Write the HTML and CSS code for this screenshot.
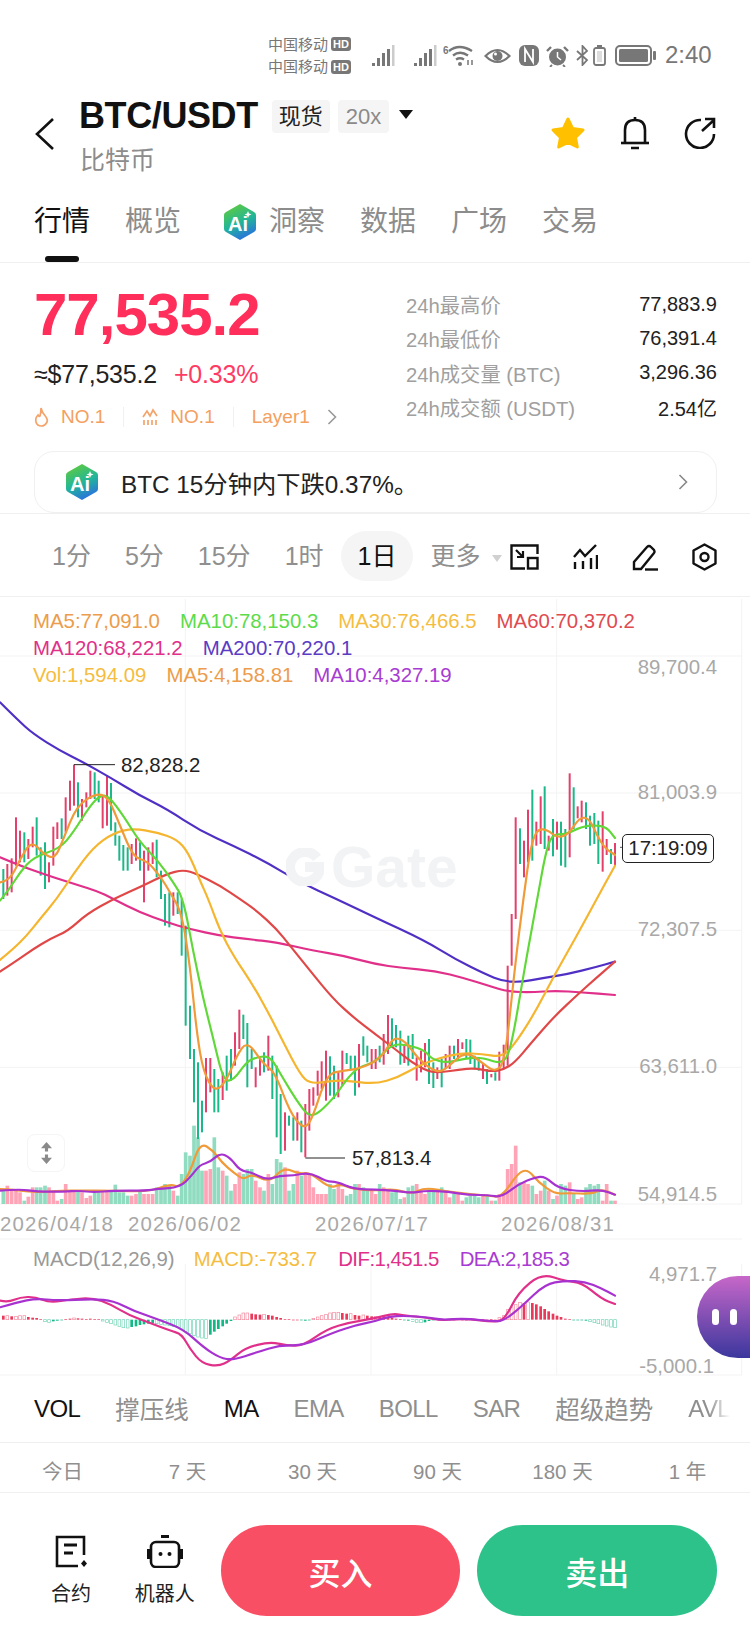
FILE: index.html
```html
<!DOCTYPE html>
<html lang="zh-CN">
<head>
    <meta charset="UTF-8">
    <meta name="viewport" content="width=device-width, initial-scale=1.0">
    <title>BTC/USDT</title>
    <link rel="stylesheet" href="styles.css">
</head>
<body>
    <svg class="defs" width="0" height="0">
        <defs>
            <linearGradient id="aiGrad" x1="0.2" y1="0" x2="0.6" y2="1">
                <stop offset="0" stop-color="#62cc3a"/>
                <stop offset="0.55" stop-color="#22b59a"/>
                <stop offset="1" stop-color="#2a6fe0"/>
            </linearGradient>
            <symbol id="aiIcon" viewBox="0 0 34 38">
                <path d="M17 1 L31 9 Q33 10 33 12 V26 Q33 28 31 29 L17 37 L3 29 Q1 28 1 26 V12 Q1 10 3 9 Z" fill="url(#aiGrad)"/>
                <text x="15" y="28" text-anchor="middle" class="ai-letters">Ai</text>
                <path d="M25 8 L26 10.500 L28.500 11.500 L26 12.500 L25 15 L24 12.500 L21.500 11.500 L24 10.500 Z" fill="#fff"/>
            </symbol>
        </defs>
    </svg>

    <div class="status-bar">
        <div class="carriers">
            <div class="carrier">中国移动<span class="hd">HD</span></div>
            <div class="carrier">中国移动<span class="hd">HD</span></div>
        </div>
        <svg class="st-signal" width="23" height="21" viewBox="0 0 23 21" fill="#777"><rect x="0" y="18" width="3" height="3"/><rect x="5" y="13" width="3" height="8"/><rect x="10" y="8" width="3" height="13"/><rect x="15" y="4" width="3" height="17"/><rect x="20" y="0" width="2.500" height="21" fill="#ccc"/></svg>
        <svg class="st-signal2" width="23" height="21" viewBox="0 0 23 21" fill="#777"><rect x="0" y="18" width="3" height="3"/><rect x="5" y="13" width="3" height="8"/><rect x="10" y="8" width="3" height="13"/><rect x="15" y="4" width="3" height="17"/><rect x="20" y="0" width="2.500" height="21" fill="#ccc"/></svg>
        <svg class="st-wifi" width="31" height="22" viewBox="0 0 31 22" fill="none" stroke="#777" stroke-width="2.4">
            <text x="0" y="10" class="st-six">6</text>
            <path d="M6 7 Q16 -1 29 7"/><path d="M10 11.500 Q17 6 25 11.500"/><path d="M13 15.500 Q17 13 21 15.500"/>
            <circle cx="17" cy="20" r="2" fill="#777" stroke="none"/>
            <path d="M25 16 V21 M29 16 V21" stroke-width="1.5"/>
        </svg>
        <svg class="st-eye" width="27" height="16" viewBox="0 0 27 16"><path d="M1.500 8 Q13.500 -4 25.500 8 Q13.500 20 1.500 8 Z" fill="none" stroke="#777" stroke-width="2.2"/><circle cx="13.500" cy="8" r="5" fill="#777"/><circle cx="11.500" cy="6" r="1.500" fill="#fff"/></svg>
        <svg class="st-nfc" width="20" height="21" viewBox="0 0 20 21"><rect x="0" y="0" width="20" height="21" rx="6" fill="#777"/><path d="M6 17 V4 L14 17 V4" fill="none" stroke="#fff" stroke-width="1.800"/></svg>
        <svg class="st-alarm" width="23" height="22" viewBox="0 0 23 22" fill="none" stroke="#777" stroke-width="2.400"><path d="M1 6 L5 2 M22 6 L18 2"/><path d="M6 20 L4 22 M17 20 L19 22" stroke-width="1.800"/><circle cx="11.500" cy="12" r="8.500" fill="#777" stroke="none"/><path d="M11.500 7 V12 L15 15" stroke="#fff" stroke-width="1.500"/></svg>
        <svg class="st-bt" width="13" height="21" viewBox="0 0 13 21" fill="none" stroke="#777" stroke-width="1.8"><path d="M1 6 L11 15 L6.500 20 V1 L11 6 L1 15"/></svg>
        <svg class="st-vib" width="13" height="21" viewBox="0 0 13 21"><rect x="1" y="3" width="11" height="17" rx="2" fill="none" stroke="#777" stroke-width="1.8"/><rect x="4" y="0" width="5" height="2" fill="#777"/><rect x="4" y="6" width="5" height="11" fill="#ddd"/></svg>
        <svg class="st-batt" width="41" height="21" viewBox="0 0 41 21"><rect x="1" y="1" width="35" height="19" rx="4" fill="none" stroke="#777" stroke-width="2"/><rect x="4" y="4" width="29" height="13" rx="1.500" fill="#777"/><rect x="38" y="6" width="3" height="9" rx="1" fill="#777"/></svg>
        <span class="clock">2:40</span>
    </div>

    <header class="header">
        <svg class="back" width="20" height="32" viewBox="0 0 20 32"><path d="M18 1 L2 16 L18 31" fill="none" stroke="#111" stroke-width="2.6"/></svg>
        <div class="pair">
            <div class="pair-top">
                <h1 class="pair-name">BTC/USDT</h1>
                <span class="chip chip-dark">现货</span>
                <span class="chip">20x</span>
                <span class="caret"></span>
            </div>
            <div class="pair-sub">比特币</div>
        </div>
        <div class="header-icons">
            <svg width="36" height="34" viewBox="0 0 36 34"><path d="M18 3 L22.500 12.500 L33 14 L25.500 21.500 L27.300 31 L18 26.500 L8.700 31 L10.500 21.500 L3 14 L13.500 12.500 Z" fill="#ffc000" stroke="#ffc000" stroke-width="3" stroke-linejoin="round"/></svg>
            <svg width="30" height="34" viewBox="0 0 30 34" fill="none" stroke="#111" stroke-width="2.6"><path d="M5 26 V14 Q5 4 15 4 Q25 4 25 14 V26"/><path d="M1 27 H29"/><path d="M15 1 V4 M11 32 H19"/></svg>
            <svg width="32" height="32" viewBox="0 0 32 32" fill="none" stroke="#111" stroke-width="2.6"><path d="M17 3 A14 14 0 1 0 30 17"/><path d="M18 14 L30 3 M21 2 H30 V11"/></svg>
        </div>
    </header>

    <nav class="tabs">
        <span class="tab active">行情</span>
        <span class="tab">概览</span>
        <span class="tab tab-ai"><svg width="34" height="38"><use href="#aiIcon"/></svg>洞察</span>
        <span class="tab">数据</span>
        <span class="tab">广场</span>
        <span class="tab">交易</span>
    </nav>

    <section class="summary">
        <div class="summary-left">
            <div class="price">77,535.2</div>
            <div class="price-sub">≈$77,535.2<span class="change">+0.33%</span></div>
            <div class="tags">
                <svg width="15" height="20" viewBox="0 0 15 20" fill="none" stroke="#f4a46a" stroke-width="1.7"><path d="M7 1 Q8 6 12 10 Q14 13 13 15 Q11 19 7.500 19 Q3 19 2 15 Q1 11 4 8 Q5 10 6 9 Q7 6 7 1 Z"/></svg>
                <span class="tag-text">NO.1</span>
                <span class="tag-sep"></span>
                <svg width="16" height="18" viewBox="0 0 16 18" fill="none" stroke="#f4a46a" stroke-width="1.7"><path d="M1 9 L5 3 L8 8 L11 2 L15 8"/><path d="M2 12 V17 M6 12 V17 M10 12 V17 M14 12 V17"/></svg>
                <span class="tag-text">NO.1</span>
                <span class="tag-sep"></span>
                <span class="tag-text">Layer1</span>
                <svg class="tag-chev" width="10" height="16" viewBox="0 0 10 16"><path d="M1.500 1 L8.500 8 L1.500 15" fill="none" stroke="#999" stroke-width="1.6"/></svg>
            </div>
        </div>
        <dl class="stats">
            <div class="stat"><dt>24h最高价</dt><dd>77,883.9</dd></div>
            <div class="stat"><dt>24h最低价</dt><dd>76,391.4</dd></div>
            <div class="stat"><dt>24h成交量 (BTC)</dt><dd>3,296.36</dd></div>
            <div class="stat"><dt>24h成交额 (USDT)</dt><dd>2.54亿</dd></div>
        </dl>
    </section>

    <div class="ai-card">
        <svg width="34" height="38"><use href="#aiIcon"/></svg>
        <span class="ai-text">BTC 15分钟内下跌0.37%。</span>
        <svg class="ai-chev" width="10" height="16" viewBox="0 0 10 16"><path d="M1.500 1 L8.500 8 L1.500 15" fill="none" stroke="#888" stroke-width="1.6"/></svg>
    </div>

    <div class="periods">
        <span class="period">1分</span>
        <span class="period">5分</span>
        <span class="period">15分</span>
        <span class="period">1时</span>
        <span class="period active">1日</span>
        <span class="period more">更多<i class="more-caret"></i></span>
        <div class="tools">
            <svg width="29" height="26" viewBox="0 0 29 26" fill="none" stroke="#111" stroke-width="2.4"><path d="M15 24.500 H1.500 V1.500 H27.500 V10"/><rect x="18" y="14" width="9.500" height="10.500"/><path d="M6 6 L13 13 M13 7 V13 H7" stroke-width="2.2"/></svg>
            <svg width="25" height="26" viewBox="0 0 25 26" fill="none" stroke="#111" stroke-width="2.4"><path d="M1 13 L7 6 L12 12 L23 1"/><path d="M2 18 V25 M10 17 V25 M18 14 V25 M24 11 V25"/></svg>
            <svg width="26" height="27" viewBox="0 0 26 27" fill="none" stroke="#111" stroke-width="2.4"><path d="M2 25 V18 L15 3 Q17 1 19 3 L22 6 Q23 8 22 9 L9 25 Z"/><path d="M13 25.500 H26"/></svg>
            <svg width="25" height="28" viewBox="0 0 25 28" fill="none" stroke="#111" stroke-width="2.4"><path d="M12.500 1.500 L23.500 7.500 V20.500 L12.500 26.500 L1.500 20.500 V7.500 Z" stroke-linejoin="round"/><circle cx="12.500" cy="14" r="4"/></svg>
        </div>
    </div>

    <section class="chart">
        <svg class="chart-svg" id="chartSvg" viewBox="0 0 2250 2340"></svg>

        <div class="legend">
            <div class="legend-row">
                <span class="c-orange">MA5:77,091.0</span>
                <span class="c-green">MA10:78,150.3</span>
                <span class="c-yellow">MA30:76,466.5</span>
                <span class="c-red">MA60:70,370.2</span>
            </div>
            <div class="legend-row">
                <span class="c-pink">MA120:68,221.2</span>
                <span class="c-blue">MA200:70,220.1</span>
            </div>
            <div class="legend-row">
                <span class="c-yellow">Vol:1,594.09</span>
                <span class="c-orange">MA5:4,158.81</span>
                <span class="c-purple">MA10:4,327.19</span>
            </div>
        </div>

        <div class="watermark">
            <svg width="38" height="38" viewBox="0 0 38 38" fill="none" stroke="#f2f3f4" stroke-width="10"><path d="M31 10 A15 15 0 1 0 34 19 H19"/></svg>
            <span>Gate</span>
        </div>

        <span class="axis axis-1">89,700.4</span>
        <span class="axis axis-2">81,003.9</span>
        <span class="axis axis-3">72,307.5</span>
        <span class="axis axis-4">63,611.0</span>
        <span class="axis axis-5">54,914.5</span>
        <span class="axis axis-6">4,971.7</span>
        <span class="axis axis-7">-5,000.1</span>

        <span class="mark mark-high">82,828.2</span>
        <span class="mark mark-low">57,813.4</span>
        <span class="countdown">17:19:09</span>

        <div class="resize">
            <svg width="11" height="22" viewBox="0 0 14 28" fill="#8a8a8a"><path d="M7 0 L14 8 H9 V12 H5 V8 H0 Z"/><path d="M7 28 L14 20 H9 V16 H5 V20 H0 Z"/></svg>
        </div>

        <span class="date date-1">2026/04/18</span>
        <span class="date date-2">2026/06/02</span>
        <span class="date date-3">2026/07/17</span>
        <span class="date date-4">2026/08/31</span>

        <div class="macd-legend">
            <span class="c-gray">MACD(12,26,9)</span>
            <span class="c-yellow">MACD:-733.7</span>
            <span class="c-pink tight">DIF:1,451.5</span>
            <span class="c-purple tight">DEA:2,185.3</span>
        </div>

        <div class="assistant"><i></i><i></i></div>
    </section>

    <nav class="indicators">
        <span class="ind on latin">VOL</span>
        <span class="ind">撑压线</span>
        <span class="ind on latin">MA</span>
        <span class="ind latin">EMA</span>
        <span class="ind latin">BOLL</span>
        <span class="ind latin">SAR</span>
        <span class="ind">超级趋势</span>
        <span class="ind latin fade">AVL</span>
    </nav>

    <div class="ranges">
        <span>今日</span>
        <span>7 天</span>
        <span>30 天</span>
        <span>90 天</span>
        <span>180 天</span>
        <span>1 年</span>
    </div>

    <footer class="actions">
        <div class="action-link link-contract">
            <svg width="32" height="33" viewBox="0 0 32 33" fill="none" stroke="#111" stroke-width="2.6"><path d="M29 20 V2 H2 V31 H23"/><path d="M9 10 H22 M9 18 H18" stroke-width="3"/><path d="M29 25 L32 28.500 L29 32 L26 28.500 Z" fill="#111" stroke="none"/></svg>
            <span>合约</span>
        </div>
        <div class="action-link link-robot">
            <svg width="36" height="33" viewBox="0 0 36 33" fill="none" stroke="#111" stroke-width="2.6"><rect x="4" y="7" width="28" height="25" rx="5"/><path d="M14 1.500 H22" stroke-width="3"/><path d="M1.500 14 V24 M34.500 14 V24" stroke-width="3"/><circle cx="13.500" cy="19" r="2" fill="#111" stroke="none"/><circle cx="22.500" cy="19" r="2" fill="#111" stroke="none"/></svg>
            <span>机器人</span>
        </div>
        <button class="btn btn-buy">买入</button>
        <button class="btn btn-sell">卖出</button>
    </footer>

    <script>
        // all chart coordinates are in 3x units, y = 0 is page y 600
        const candles = [
            [10,810,900,'g'],[22,795,890,'r'],[35,778,880,'r'],[48,655,800,'r'],[60,695,790,'r'],[73,700,790,'g'],[85,720,780,'r'],[98,683,745,'r'],[110,655,770,'g'],[122,745,830,'g'],
            [135,730,870,'g'],[147,790,850,'r'],[160,683,800,'r'],[172,670,720,'r'],[185,658,720,'g'],[197,595,700,'r'],[210,545,635,'r'],[222,497,620,'r'],[234,550,655,'g'],[246,600,665,'r'],
            [259,580,625,'r'],[271,515,600,'r'],[284,520,600,'g'],[296,545,610,'g'],[308,590,688,'r'],[321,530,680,'r'],[333,552,695,'g'],[346,670,740,'g'],[358,710,785,'g'],[370,738,815,'g'],
            [383,745,815,'g'],[395,735,795,'r'],[408,718,785,'r'],[420,730,815,'g'],[432,755,910,'r'],[445,745,815,'r'],[458,730,795,'r'],[470,722,835,'g'],[483,815,900,'g'],[495,885,980,'g'],
            [508,880,985,'g'],[520,880,950,'r'],[533,880,945,'g'],[545,900,1070,'g'],[557,980,1280,'g'],[570,1220,1380,'g'],[582,1350,1510,'g'],[594,1390,1620,'g'],[606,1505,1600,'g'],[618,1377,1540,'r'],
            [631,1377,1480,'r'],[643,1410,1540,'g'],[655,1440,1540,'g'],[668,1420,1503,'r'],[680,1370,1475,'g'],[693,1350,1445,'g'],[705,1300,1400,'r'],[718,1232,1350,'r'],[730,1247,1320,'g'],[742,1272,1465,'g'],
            [755,1350,1410,'g'],[767,1405,1465,'r'],[780,1380,1430,'r'],[792,1360,1420,'g'],[805,1310,1415,'r'],[817,1370,1500,'g'],[830,1400,1615,'g'],[842,1485,1665,'g'],[855,1540,1655,'r'],[867,1550,1580,'g'],
            [880,1555,1625,'g'],[892,1540,1625,'r'],[904,1565,1660,'g'],[916,1515,1675,'r'],[928,1470,1595,'r'],[940,1465,1520,'r'],[953,1415,1490,'r'],[965,1387,1470,'r'],[978,1355,1505,'r'],[990,1372,1490,'g'],
            [1002,1400,1500,'g'],[1015,1420,1495,'r'],[1027,1355,1460,'r'],[1040,1362,1395,'g'],[1052,1370,1410,'g'],[1065,1370,1490,'g'],[1077,1335,1465,'r'],[1090,1312,1370,'g'],[1102,1340,1390,'g'],[1115,1350,1410,'r'],
            [1127,1350,1410,'r'],[1139,1340,1390,'g'],[1151,1305,1397,'r'],[1164,1248,1365,'r'],[1176,1258,1340,'g'],[1188,1278,1345,'g'],[1201,1295,1397,'g'],[1213,1340,1392,'r'],[1225,1310,1400,'g'],[1238,1305,1380,'g'],
            [1250,1375,1445,'r'],[1263,1355,1420,'r'],[1275,1332,1405,'r'],[1287,1320,1455,'g'],[1300,1390,1467,'g'],[1312,1405,1440,'r'],[1325,1380,1465,'g'],[1337,1365,1410,'r'],[1349,1340,1410,'r'],[1362,1340,1380,'g'],
            [1374,1320,1380,'r'],[1387,1330,1350,'r'],[1399,1320,1380,'g'],[1411,1322,1395,'g'],[1424,1370,1410,'g'],[1436,1380,1415,'g'],[1449,1395,1440,'r'],[1461,1410,1455,'g'],[1474,1425,1435,'r'],[1486,1420,1445,'g'],
            [1498,1358,1445,'r'],[1511,1337,1410,'r'],[1523,1100,1400,'r'],[1535,945,1100,'r'],[1547,655,960,'r'],[1560,688,795,'g'],[1572,725,835,'r'],[1584,632,790,'r'],[1597,572,785,'g'],[1609,668,740,'r'],
            [1622,592,735,'r'],[1634,562,750,'g'],[1646,710,755,'r'],[1659,660,772,'g'],[1671,668,752,'r'],[1683,668,800,'g'],[1696,690,805,'g'],[1709,523,775,'r'],[1721,565,690,'g'],[1733,622,658,'r'],
            [1745,605,670,'r'],[1758,610,690,'g'],[1770,650,740,'g'],[1783,642,735,'g'],[1795,665,795,'g'],[1808,637,818,'r'],[1820,720,768,'r'],[1833,750,795,'g'],[1845,732,800,'r']
        ];
        const volumes = [
            45,55,45,40,35,10,22,50,50,50,55,50,40,10,15,60,40,40,40,35,18,25,35,40,40,38,40,58,35,35,25,25,30,40,30,30,
            30,50,50,60,55,40,25,90,155,145,235,200,100,100,105,200,110,100,85,40,60,95,90,105,105,70,50,40,90,60,135,125,110,40,60,100,85,90,90,50,30,30,30,60,45,60,45,25,30,60,60,50,45,45,
            30,60,50,45,35,40,15,20,50,55,60,40,30,45,45,45,50,40,20,30,30,10,20,25,25,20,30,25,10,10,30,35,105,120,175,65,65,60,55,30,40,70,40,15,25,60,55,65,30,15,20,50,60,55,60,10,60,10,10
        ];
        const macdBars = [
            12,12,10,10,12,12,8,6,5,2,-6,-8,-5,-3,-1,2,3,5,4,3,2,3,2,1,-4,-8,-12,-16,-20,-24,-25,-22,-20,-16,-14,-12,-10,-12,-14,-16,-18,-20,
            -24,-30,-36,-42,-48,-52,-55,-56,-45,-36,-28,-20,-12,-4,8,14,20,20,18,16,15,16,14,12,8,5,2,1,0,0,-2,-3,-2,4,8,12,16,20,22,22,20,18,18,14,12,14,12,10,
            10,9,8,7,5,3,2,-1,-3,-5,-8,-9,-8,-4,-2,1,1,0,1,0,1,0,0,1,0,0,1,0,1,0,6,12,30,38,45,52,50,53,50,46,40,32,25,18,12,8,3,1,-1,-1,-2,-3,-6,-9,-12,-16,-19,-22,-24
        ];
        const lines = [
            ['#e0308a', '0,775 60,800 130,825 200,848 290,875 340,900 420,940 500,970 570,990 660,1010 740,1020 830,1030 940,1055 1030,1070 1125,1095 1205,1107 1305,1115 1395,1138 1465,1160 1525,1178 1595,1180 1665,1175 1745,1180 1845,1188'],
            ['#5030c4', '0,310 50,360 100,405 180,455 250,490 330,535 420,590 500,630 600,695 700,740 800,790 900,850 1010,900 1125,955 1275,1025 1365,1080 1455,1125 1510,1147 1565,1149 1625,1138 1705,1125 1785,1105 1845,1088'],
            ['#e04848', '0,1118 50,1085 100,1050 150,1020 205,995 260,945 340,900 430,860 500,825 550,812 590,825 660,860 720,900 770,935 830,990 870,1040 930,1115 1000,1200 1060,1255 1125,1305 1185,1350 1235,1390 1285,1418 1325,1420 1375,1412 1425,1407 1475,1418 1510,1412 1545,1390 1595,1330 1665,1250 1735,1185 1785,1140 1845,1088'],
            ['#f5b52e', '0,1083 40,1050 80,1010 120,960 170,900 220,825 280,745 340,702 400,688 470,700 530,720 565,760 600,845 625,900 660,995 700,1070 760,1160 810,1250 850,1330 900,1425 930,1455 1000,1445 1040,1445 1125,1455 1195,1435 1255,1400 1315,1378 1385,1362 1445,1365 1510,1375 1555,1320 1605,1240 1665,1125 1725,1020 1790,900 1845,800'],
            ['#5fd838', '0,905 25,875 60,820 100,775 180,748 220,700 270,620 300,590 325,590 370,650 420,730 470,780 520,850 550,900 580,1060 610,1200 640,1320 670,1445 700,1445 740,1388 770,1375 810,1370 850,1440 900,1520 935,1560 1000,1500 1040,1440 1075,1405 1125,1390 1175,1335 1225,1338 1275,1355 1295,1380 1340,1392 1395,1378 1445,1375 1510,1397 1535,1340 1575,1100 1612,900 1635,770 1655,705 1695,707 1745,683 1785,678 1820,685 1845,717'],
            ['#f09a38', '0,850 30,845 60,780 95,725 130,765 165,780 190,720 230,620 290,582 325,595 360,680 400,775 440,785 480,830 510,880 545,940 570,1100 590,1300 610,1420 645,1480 680,1445 710,1370 742,1325 790,1395 825,1420 870,1540 910,1590 935,1565 980,1425 1030,1415 1070,1410 1125,1390 1155,1360 1180,1315 1215,1325 1255,1380 1300,1415 1330,1418 1395,1355 1445,1390 1485,1420 1515,1390 1545,1100 1570,900 1595,720 1625,680 1690,730 1755,630 1805,740 1845,768'],
            ['#f09a38', '0,1770 20,1770 60,1775 110,1780 190,1775 240,1775 340,1775 450,1778 510,1755 540,1765 570,1720 600,1630 640,1655 665,1690 700,1720 730,1742 755,1725 810,1750 850,1705 900,1725 930,1720 990,1768 1020,1755 1060,1770 1125,1775 1185,1770 1235,1785 1275,1765 1355,1780 1465,1790 1505,1795 1555,1720 1585,1712 1615,1750 1665,1785 1705,1782 1775,1785 1805,1770 1845,1787'],
            ['#a832d0', '0,1775 60,1770 110,1778 190,1778 240,1775 280,1780 340,1775 440,1775 470,1770 540,1765 575,1730 600,1697 630,1690 660,1662 690,1675 720,1715 755,1720 800,1743 840,1730 880,1730 930,1720 980,1748 1010,1748 1060,1770 1125,1772 1185,1775 1235,1782 1275,1775 1345,1778 1405,1788 1465,1788 1505,1795 1555,1755 1605,1735 1635,1732 1675,1768 1745,1778 1805,1772 1845,1787'],
            ['#e0308a', '0,2105 25,2110 60,2095 105,2093 150,2112 215,2100 280,2097 330,2115 390,2150 450,2172 510,2195 545,2205 570,2250 605,2293 655,2302 690,2285 735,2247 810,2228 860,2240 910,2240 980,2190 1050,2170 1125,2158 1180,2143 1215,2150 1275,2155 1325,2165 1395,2158 1485,2170 1515,2160 1555,2080 1625,2023 1695,2047 1745,2050 1805,2100 1845,2115'],
            ['#a832d0', '0,2125 50,2110 110,2098 170,2105 280,2100 340,2105 400,2135 470,2160 550,2190 610,2245 660,2277 700,2283 770,2260 840,2238 910,2240 1000,2200 1070,2178 1125,2167 1165,2153 1215,2150 1285,2155 1325,2163 1395,2158 1485,2168 1515,2163 1565,2122 1635,2055 1695,2045 1755,2048 1805,2068 1845,2090']
        ];

        const RED = '#e3406c', GREEN = '#1db889', VOL_RED = '#ffa3b6', VOL_GREEN = '#8fdcc0';
        const BASE_VOL = 1815, BASE_MACD = 2162;
        let svg = '';

        function hLine(y, x1, x2) {
            return `<path d="M${x1} ${y} H${x2}" stroke="#f3f3f3" stroke-width="3"/>`;
        }
        function vLine(x, y1, y2) {
            return `<path d="M${x} ${y1} V${y2}" stroke="#f3f3f3" stroke-width="3"/>`;
        }
        // quadratic through midpoints so the averages look smooth
        function smooth(str) {
            const p = str.split(' ').map(s => s.split(',').map(Number));
            let d = `M${p[0][0]} ${p[0][1]}`;
            for (let i = 1; i < p.length - 1; i++) {
                const mx = (p[i][0] + p[i + 1][0]) / 2, my = (p[i][1] + p[i + 1][1]) / 2;
                d += ` Q${p[i][0]} ${p[i][1]} ${mx} ${my}`;
            }
            const last = p[p.length - 1];
            return d + ` L${last[0]} ${last[1]}`;
        }

        [171, 582, 994, 1405, 1815].forEach(y => svg += hLine(y, 0, 2226));
        svg += hLine(1920, 0, 2226) + hLine(2328, 0, 2226);
        [556, 1670, 2225].forEach(x => svg += vLine(x, 0, 1815));
        [556, 1113, 1670, 2225].forEach(x => svg += vLine(x, 1995, 2328));

        volumes.forEach((h, i) => {
            const c = candles[i];
            svg += `<rect x="${c[0] - 5.5}" y="${BASE_VOL - h}" width="11" height="${h}" fill="${c[3] === 'r' ? VOL_RED : VOL_GREEN}"/>`;
        });
        candles.forEach(c => {
            svg += `<rect x="${c[0] - 3}" y="${c[1]}" width="6" height="${c[2] - c[1]}" fill="${c[3] === 'r' ? RED : GREEN}"/>`;
        });

        macdBars.forEach((v, i) => {
            const x = candles[i][0], col = v >= 0 ? '#ea3a5c' : '#12b886';
            const h = Math.abs(v), y = v >= 0 ? BASE_MACD - h : BASE_MACD;
            const grow = i > 0 && h >= Math.abs(macdBars[i - 1]);
            if (grow && h > 3) {
                svg += `<rect x="${x - 4}" y="${y}" width="8" height="${h}" fill="#fff" stroke="${col}" stroke-opacity="0.6" stroke-width="2"/>`;
            } else {
                svg += `<rect x="${x - 4}" y="${y}" width="8" height="${Math.max(h, 2)}" fill="${col}"/>`;
            }
        });

        lines.forEach(l => {
            svg += `<path d="${smooth(l[1])}" fill="none" stroke="${l[0]}" stroke-width="6.500" stroke-linecap="round"/>`;
        });

        // high / low markers and the tick next to the countdown
        svg += '<path d="M222 497 H345" stroke="#222" stroke-width="3" fill="none"/>';
        svg += '<path d="M916 1677 H1035" stroke="#222" stroke-width="3" fill="none"/>';
        svg += '<path d="M1860 745 H1867" stroke="#555" stroke-width="3" fill="none"/>';

        document.getElementById('chartSvg').innerHTML = svg;
    </script>
</body>
</html>
```

FILE: styles.css
```css
* {
    box-sizing: border-box;
}
body {
    margin: 0;
    width: 750px;
    height: 1650px;
    overflow: hidden;
    background: #fff;
    color: #111;
    font-family: "Liberation Sans", "Noto Sans CJK SC", sans-serif;
}
.defs {
    position: absolute;
}
.ai-letters {
    font-family: "Liberation Sans", sans-serif;
    font-size: 20px;
    font-weight: bold;
    fill: #fff;
}

/* status bar */
.status-bar {
    height: 90px;
    padding-top: 33px;
    display: flex;
    align-items: flex-start;
    color: #777;
}
.carriers {
    margin-left: 268px;
    width: 104px;
}
.carrier {
    height: 22.500px;
    font-size: 15px;
    line-height: 19px;
    display: flex;
    align-items: center;
    gap: 3px;
}
.hd {
    font-size: 11px;
    font-weight: bold;
    color: #fff;
    background: #777;
    border-radius: 3px;
    padding: 0 2px;
    line-height: 14px;
}
.st-signal {
    margin-top: 12px;
}
.st-signal2 {
    margin: 12px 0 0 19px;
}
.st-wifi {
    margin: 11px 0 0 6px;
}
.st-six {
    font-family: "Liberation Sans", sans-serif;
    font-size: 10px;
    font-weight: bold;
    fill: #777;
    stroke: none;
}
.st-eye {
    margin: 15px 0 0 10px;
}
.st-nfc {
    margin: 12px 0 0 8px;
}
.st-alarm {
    margin: 12px 0 0 7px;
}
.st-bt {
    margin: 12px 0 0 7px;
}
.st-vib {
    margin: 12px 0 0 4px;
}
.st-batt {
    margin: 12px 0 0 9px;
}
.clock {
    margin: 8px 0 0 9px;
    font-size: 24px;
    line-height: 28px;
}

/* header */
.header {
    height: 95px;
    padding-top: 9px;
    position: relative;
    display: flex;
    align-items: flex-start;
}
.back {
    margin: 19px 0 0 35px;
}
.pair {
    margin-left: 24px;
}
.pair-top {
    display: flex;
    align-items: center;
    height: 34px;
}
.pair-name {
    margin: 0;
    font-size: 36px;
    line-height: 34px;
    letter-spacing: -0.4px;
}
.chip {
    height: 33px;
    margin-left: 8px;
    padding: 0 8px;
    border-radius: 4px;
    background: #f5f5f5;
    color: #8a8a8a;
    font-size: 22px;
    line-height: 33px;
}
.chip-dark {
    margin-left: 14px;
    padding: 0 7px;
    color: #222;
    font-size: 22px;
}
.caret {
    margin: -4px 0 0 10px;
    border-left: 7px solid transparent;
    border-right: 7px solid transparent;
    border-top: 9px solid #111;
}
.pair-sub {
    margin: 12px 0 0 1px;
    font-size: 25px;
    line-height: 30px;
    color: #8c8c8c;
}
.header-icons {
    margin-left: auto;
    margin-right: 34px;
    padding-top: 17px;
    display: flex;
    align-items: center;
    gap: 34px;
}

/* tabs */
.tabs {
    height: 78px;
    padding: 18px 0 0 34px;
    display: flex;
    align-items: flex-start;
    gap: 35px;
    border-bottom: 1px solid #f0f0f0;
    position: relative;
}
.tab {
    font-size: 28px;
    line-height: 38px;
    color: #8c8c8c;
    display: flex;
    align-items: center;
    gap: 12px;
}
.tab.active {
    color: #111;
    position: relative;
}
.tab.active::after {
    content: "";
    position: absolute;
    left: 11px;
    top: 53px;
    width: 34px;
    height: 6px;
    border-radius: 3px;
    background: #111;
}
.tab-ai {
    margin-left: 7px;
}

/* price summary */
.summary {
    height: 188px;
    padding: 20px 33px 0 34px;
    display: flex;
    justify-content: space-between;
}
.price {
    font-size: 60px;
    font-weight: bold;
    line-height: 64px;
    letter-spacing: -1px;
    color: #ff2e5a;
}
.price-sub {
    margin-top: 12px;
    font-size: 25px;
    line-height: 30px;
    letter-spacing: -0.2px;
    color: #222;
}
.change {
    margin-left: 17px;
    color: #ff3b63;
}
.tags {
    margin-top: 14px;
    height: 28px;
    display: flex;
    align-items: center;
    gap: 12px;
}
.tag-text {
    font-size: 19px;
    color: #f4a05e;
}
.tag-sep {
    width: 1px;
    height: 20px;
    margin: 0 6px;
    background: #f0f0f0;
}
.tag-chev {
    margin-left: 5px;
}
.stats {
    margin: 4px 0 0;
    width: 311px;
}
.stat {
    height: 34.300px;
    display: flex;
    align-items: center;
    justify-content: space-between;
}
.stat dt {
    font-size: 20.300px;
    color: #a0a0a0;
}
.stat dd {
    margin: 0;
    font-size: 20px;
    color: #222;
}

/* ai banner */
.ai-card {
    margin: 0 33px 0 34px;
    height: 62px;
    padding: 0 28px 0 30px;
    display: flex;
    align-items: center;
    gap: 22px;
    border: 1px solid #f0f0f0;
    border-radius: 20px;
}
.ai-text {
    font-size: 24.300px;
    color: #222;
}
.ai-chev {
    margin-left: auto;
}

/* period row */
.periods {
    height: 84px;
    margin-top: 0;
    padding: 17px 33px 0 35px;
    display: flex;
    align-items: flex-start;
    border-top: 1px solid #f0f0f0;
    border-bottom: 1px solid #f0f0f0;
}
.period {
    height: 50px;
    padding: 0 17px;
    border-radius: 25px;
    font-size: 25px;
    line-height: 50px;
    color: #8f8f8f;
    white-space: nowrap;
}
.period.active {
    color: #111;
    background: #f5f5f5;
}
.more {
    padding-right: 0;
    display: flex;
    align-items: center;
}
.more-caret {
    margin: 4px 0 0 12px;
    border-left: 5px solid transparent;
    border-right: 5px solid transparent;
    border-top: 7px solid #d0d0d0;
}
.tools {
    margin-left: auto;
    padding-top: 12px;
    display: flex;
    align-items: center;
    gap: 34px;
}

/* chart canvas */
.chart {
    position: relative;
    height: 782px;
}
.chart-svg {
    position: absolute;
    left: 0;
    top: 2px;
    width: 750px;
    height: 780px;
}
.legend {
    position: absolute;
    left: 33px;
    top: 11px;
}
.legend-row {
    height: 27px;
    display: flex;
    gap: 20px;
    font-size: 20.400px;
    line-height: 27px;
    white-space: nowrap;
}
.c-orange { color: #ec9c4c; }
.c-green { color: #5ddb4c; }
.c-yellow { color: #f5bd3f; }
.c-red { color: #e04a50; }
.c-pink { color: #e0308a; }
.c-blue { color: #5a3cc4; }
.c-purple { color: #a83cd2; }
.c-gray { color: #999; }
.watermark {
    position: absolute;
    left: 286px;
    top: 250px;
    display: flex;
    align-items: center;
    gap: 7px;
    font-size: 57px;
    font-weight: bold;
    line-height: 40px;
    color: #f2f3f4;
}
.axis {
    position: absolute;
    right: 33px;
    font-size: 20.400px;
    line-height: 24px;
    color: #a8a8a8;
}
.axis-1 { top: 58px; }
.axis-2 { top: 183px; }
.axis-3 { top: 320px; }
.axis-4 { top: 457px; }
.axis-5 { top: 585px; }
.axis-6 { top: 665px; right: 33px; }
.axis-7 { top: 757px; right: 36px; }
.mark {
    position: absolute;
    font-size: 20.400px;
    line-height: 24px;
    color: #222;
}
.mark-high {
    left: 121px;
    top: 156px;
}
.mark-low {
    left: 352px;
    top: 549px;
}
.countdown {
    position: absolute;
    left: 622px;
    top: 237px;
    width: 92px;
    height: 29px;
    border: 1.500px solid #222;
    border-radius: 5px;
    background: #fff;
    font-size: 20.400px;
    line-height: 26px;
    text-align: center;
    color: #222;
}
.resize {
    position: absolute;
    left: 27px;
    top: 537px;
    width: 38px;
    height: 38px;
    display: flex;
    align-items: center;
    justify-content: center;
    border: 1px solid #f5f5f5;
    border-radius: 8px;
    background: #fff;
}
.date {
    position: absolute;
    top: 615px;
    font-size: 20.400px;
    line-height: 24px;
    letter-spacing: 1.200px;
    color: #a8a8a8;
}
.date-1 { left: 0; }
.date-2 { left: 128px; }
.date-3 { left: 315px; }
.date-4 { left: 501px; }
.macd-legend {
    position: absolute;
    left: 33px;
    top: 649px;
    display: flex;
    gap: 21px;
    font-size: 20.400px;
    line-height: 26px;
    white-space: nowrap;
}
.macd-legend .c-gray {
    margin-right: -2px;
}
.macd-legend .tight {
    letter-spacing: -0.550px;
}
.assistant {
    position: absolute;
    right: 0;
    top: 679px;
    width: 53px;
    height: 82px;
    padding-left: 15px;
    display: flex;
    align-items: center;
    gap: 11px;
    border-radius: 41px 0 0 41px;
    background: linear-gradient(to bottom, #c767c9, #3b379d);
}
.assistant i {
    width: 7px;
    height: 16px;
    border-radius: 4px;
    background: #fff;
}

/* indicator tabs */
.indicators {
    height: 64px;
    padding: 0 0 4px 34px;
    display: flex;
    align-items: center;
    gap: 35px;
    overflow: hidden;
    border-bottom: 1px solid #f0f0f0;
}
.ind {
    flex: none;
    font-size: 24.500px;
    color: #8f8f8f;
    white-space: nowrap;
}
.ind.latin {
    font-size: 24px;
    letter-spacing: -0.600px;
}
.ind.on {
    color: #111;
}
.fade {
    -webkit-mask-image: linear-gradient(to right, #000 50%, transparent);
    mask-image: linear-gradient(to right, #000 50%, transparent);
}

/* range row */
.ranges {
    height: 50px;
    padding-top: 4px;
    display: grid;
    grid-template-columns: repeat(6, 125px);
    align-items: center;
    text-align: center;
    font-size: 20.500px;
    color: #8f8f8f;
    border-bottom: 1px solid #f0f0f0;
}

/* bottom actions */
.actions {
    padding: 32px 33px 0 0;
    display: flex;
    align-items: flex-start;
    position: relative;
}
.action-link {
    padding-top: 10px;
    display: flex;
    flex-direction: column;
    align-items: center;
    gap: 13px;
    font-size: 20px;
    line-height: 26px;
    color: #222;
}
.link-contract {
    width: 72px;
    margin-left: 35px;
}
.link-robot {
    width: 72px;
    margin: 0 20px 0 22px;
}
.btn {
    width: 240px;
    height: 91px;
    border: none;
    border-radius: 46px;
    color: #fff;
    font-family: inherit;
    font-size: 32px;
    font-weight: 500;
}
.btn-buy {
    background: #f94f64;
}
.btn-sell {
    margin-left: 17px;
    background: #2cc28a;
}
```
